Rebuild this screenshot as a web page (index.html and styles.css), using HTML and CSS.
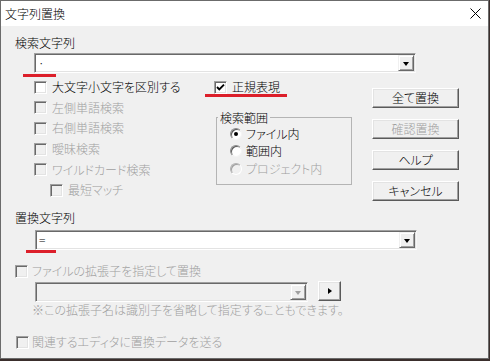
FILE: index.html
```html
<!DOCTYPE html>
<html lang="ja">
<head>
<meta charset="utf-8">
<title>文字列置換</title>
<link rel="stylesheet" href="styles.css">
</head>
<body>
<div class="window">
  <div class="titlebar">
    <span class="title">文字列置換</span>
    <span class="close"><svg width="11" height="11" viewBox="0 0 11 11"><path d="M0.5 0.5 L10.5 10.5 M10.5 0.5 L0.5 10.5" stroke="#000" stroke-width="1" fill="none"/></svg></span>
  </div>
  <div class="content">
    <div class="label first">検索文字列</div>
    <div class="combo combo-search">
      <span class="combo-text">·</span>
      <span class="drop"><span class="tri"></span></span>
    </div>

    <div class="top">
      <div class="col-left">
        <div class="opt"><span class="cb"></span><span class="txt">大文字小文字を区別する</span></div>
        <div class="opt dis"><span class="cb"></span><span class="txt">左側単語検索</span></div>
        <div class="opt dis"><span class="cb"></span><span class="txt">右側単語検索</span></div>
        <div class="opt dis"><span class="cb"></span><span class="txt">曖昧検索</span></div>
        <div class="opt dis"><span class="cb"></span><span class="txt">ワイルドカード検索</span></div>
        <div class="opt dis sub"><span class="cb"></span><span class="txt">最短マッチ</span></div>
      </div>
      <div class="col-mid">
        <div class="opt"><span class="cb"><svg width="11" height="11" viewBox="0 0 11 11"><path d="M2 5 L4.3 7.4 L9 2.6" stroke="#000" stroke-width="1.9" fill="none"/></svg></span><span class="txt">正規表現</span></div>
        <fieldset class="group">
          <legend>検索範囲</legend>
          <div class="radio"><span class="rb"><span class="dot"></span></span><span class="txt">ファイル内</span></div>
          <div class="radio"><span class="rb"></span><span class="txt">範囲内</span></div>
          <div class="radio dis"><span class="rb"></span><span class="txt">プロジェクト内</span></div>
        </fieldset>
      </div>
      <div class="col-right">
        <div class="btn">全て置換</div>
        <div class="btn dis">確認置換</div>
        <div class="btn">ヘルプ</div>
        <div class="btn">キャンセル</div>
      </div>
    </div>

    <div class="label second">置換文字列</div>
    <div class="combo combo-replace">
      <span class="combo-text">=</span>
      <span class="drop"><span class="tri"></span></span>
    </div>

    <div class="opt ext dis"><span class="cb"></span><span class="txt">ファイルの拡張子を指定して置換</span></div>
    <div class="ext-row">
      <div class="combo combo-ext">
        <span class="combo-text"></span>
        <span class="drop"><span class="tri"></span></span>
      </div>
      <div class="btn small"><span class="tri-r"></span></div>
    </div>
    <div class="note">※この拡張子名は識別子を省略して指定することもできます。</div>

    <div class="opt send dis"><span class="cb"></span><span class="txt">関連するエディタに置換データを送る</span></div>

    <span class="mark mark-search"></span>
    <span class="mark mark-regex"></span>
    <span class="mark mark-replace"></span>
  </div>
</div>
</body>
</html>
```
FILE: styles.css
```css
* { box-sizing: border-box; }
html, body { margin: 0; padding: 0; }
body {
  width: 490px;
  height: 361px;
  overflow: hidden;
  background: #3a2e2c;
  font-family: "Noto Sans CJK JP", "Liberation Sans", sans-serif;
  font-size: 12px;
  font-weight: 300;
  color: #000;
  font-feature-settings: "palt";
}
.window {
  width: 489px;
  height: 359px;
  border: 1px solid #6b6b6b;
  background: #f0f0f0;
  display: flex;
  flex-direction: column;
}
.titlebar {
  flex: none;
  height: 25px;
  background: #fff;
  display: flex;
  align-items: center;
  justify-content: space-between;
  padding-left: 4px;
}
.title { line-height: 14px; }
.close {
  width: 26px;
  height: 25px;
  display: flex;
  align-items: center;
  justify-content: center;
}
.content {
  position: relative;
  flex: 1;
}
.label { line-height: 14px; margin-left: 14px; }
.label.first { margin-top: 10px; }
.label.second { margin-top: 10px; }

.combo {
  height: 20px;
  display: flex;
  align-items: center;
  background: #fff;
  border: 1px solid;
  border-color: #a0a0a0 #f7f7f7 #fff #a0a0a0;
  box-shadow: inset 1px 1px 0 #696969, inset -1px -1px 0 #e3e3e3;
  padding: 1px;
}
.combo-search { width: 382px; margin: 3px 0 0 33px; }
.combo-replace { width: 382px; margin: 5px 0 0 34px; }
.combo-text { flex: 1; padding-left: 2px; line-height: 14px; }
.drop {
  width: 16px;
  height: 16px;
  background: #f0f0f0;
  border: 1px solid;
  border-color: #f0f0f0 #696969 #696969 #f0f0f0;
  box-shadow: inset 1px 1px 0 #fff, inset -1px -1px 0 #a0a0a0;
  display: flex;
  align-items: center;
  justify-content: center;
}
.tri {
  width: 0;
  height: 0;
  border-left: 3.5px solid transparent;
  border-right: 3.5px solid transparent;
  border-top: 4px solid #000;
  margin-top: 1px;
}

.top { display: flex; margin-top: 4px; }
.col-left { margin-left: 33px; width: 180px; }
.col-mid { width: 137px; }
.col-right {
  margin-left: 21px;
  padding-top: 11px;
  display: flex;
  flex-direction: column;
  gap: 11px;
}

.opt {
  height: 20.6px;
  display: flex;
  align-items: center;
  gap: 5px;
}
.opt.sub { margin-left: 16px; }
.txt { line-height: 14px; white-space: nowrap; }
.dis .txt, .btn.dis, .note { color: #a0a0a0; }

.cb {
  width: 13px;
  height: 13px;
  flex: none;
  background: #fff;
  border: 1px solid;
  border-color: #a0a0a0 #fff #fff #a0a0a0;
  box-shadow: inset 1px 1px 0 #696969, inset -1px -1px 0 #e3e3e3;
  display: flex;
  align-items: center;
  justify-content: center;
}
.dis .cb { background: #f0f0f0; }
.cb svg { display: block; }

.group {
  margin: 13.4px 0 0 2px;
  width: 136px;
  border: 1px solid #b4b4b4;
  padding: 0 0 6.5px 1px;
  min-width: 0;
}
.group legend {
  padding: 0 2px;
  line-height: 14px;
}
.radio {
  height: 17.5px;
  display: flex;
  align-items: center;
  gap: 4px;
  margin-left: 12px;
}
.rb {
  width: 12px;
  height: 12px;
  flex: none;
  border-radius: 50%;
  background: #fff;
  border: 1px solid;
  border-color: #8a8a8a #f4f4f4 #f4f4f4 #8a8a8a;
  box-shadow: inset 1px 1px 0 #5a5a5a;
  display: flex;
  align-items: center;
  justify-content: center;
}
.dis .rb { background: #f0f0f0; border-color: #b0b0b0 #fff #fff #b0b0b0; box-shadow: inset 1px 1px 0 #a0a0a0; }
.dot { width: 4px; height: 4px; border-radius: 50%; background: #000; }

.btn {
  width: 87px;
  height: 20px;
  background: #f0f0f0;
  border: 1px solid;
  border-color: #fff #5a5a5a #5a5a5a #fff;
  box-shadow: inset -1px -1px 0 #a0a0a0, inset 1px 1px 0 #e3e3e3;
  display: flex;
  align-items: center;
  justify-content: center;
  line-height: 14px;
}

.opt.ext { height: 14px; margin: 14px 0 0 14px; gap: 4px; }
.ext-row { display: flex; margin-top: 3px; height: 20px; }
.combo-ext {
  width: 273px;
  height: 20px;
  margin-left: 34px;
  margin-top: 1px;
  background: #f0f0f0;
}
.combo-ext .tri { border-top-color: #a0a0a0; }
.btn.small { width: 23px; margin-left: 10px; }
.tri-r {
  width: 0;
  height: 0;
  border-top: 3.5px solid transparent;
  border-bottom: 3.5px solid transparent;
  border-left: 4px solid #000;
}
.note {
  line-height: 14px;
  margin: 2px 0 0 31px;
  white-space: nowrap;
}
.opt.send { height: 14px; margin: 18px 0 0 15px; gap: 3px; }

.mark {
  position: absolute;
  height: 3px;
  background: #dc1f2a;
}
.mark-search { left: 22px; top: 48px; width: 33px; }
.mark-regex { left: 204px; top: 68px; width: 82px; }
.mark-replace { left: 25px; top: 224px; width: 30px; }
```
